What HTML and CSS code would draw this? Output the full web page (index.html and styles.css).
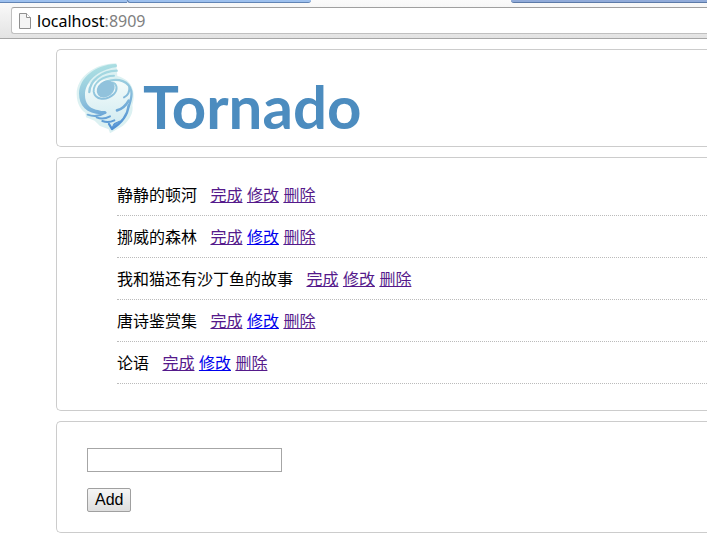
FILE: index.html
```html
<!DOCTYPE html>
<html lang="zh-CN">
<head>
    <meta charset="UTF-8">
    <meta name="viewport" content="width=device-width, initial-scale=1.0">
    <title>Tornado</title>
    <link rel="stylesheet" href="styles.css">
</head>
<body>

    <header class="browser">
        <div class="tabs">
            <span class="tab tab-first"></span>
            <span class="tab tab-second"></span>
            <span class="tab-active"></span>
            <span class="tab tab-last"></span>
        </div>
        <div class="toolbar">
            <div class="address">
                <svg class="page-icon" width="12" height="16" viewBox="0 0 12 16" aria-hidden="true">
                    <path d="M.5.5h7l4 4v11H.5z" fill="#f4f4f4" stroke="#909090"/>
                    <path d="M7.5.5v4h4" fill="#fff" stroke="#909090"/>
                </svg>
                <span class="url">localhost<span class="port">:8909</span></span>
            </div>
        </div>
    </header>

    <main class="page">
        <div class="panel logo">
            <svg class="logo-icon" width="73" height="85" viewBox="0 0 219 255" aria-hidden="true">
                <defs>
                    <linearGradient id="line" gradientUnits="userSpaceOnUse" x1="80" y1="25" x2="130" y2="225">
                        <stop offset="0" stop-color="#aee2e3"/>
                        <stop offset=".5" stop-color="#8cc0dc"/>
                        <stop offset="1" stop-color="#4a8cd2"/>
                    </linearGradient>
                    <linearGradient id="body" x1="0" y1="0" x2="0" y2="1">
                        <stop offset="0" stop-color="#f5fcfb"/>
                        <stop offset="1" stop-color="#cfeaf0"/>
                    </linearGradient>
                </defs>
                <path d="M139 22C72 22 20 65 20 114C20 144 34 164 46 170L48 184L74 194L90 210L116 220L120 232L158 210C182 190 191 168 187 148C198 112 190 72 142 60Z" fill="#dcf1f2"/>
                <path d="M138 70C174 70 192 106 180 145C180 175 160 200 128 216L118 202L92 192L82 178L58 172C36 160 32 130 34 112C38 90 60 70 138 70Z" fill="url(#body)"/>
                <path d="M136 24C76 26 28 66 27 112C27 152 53 178 104 174C109 173 109 165 104 165C92 166 87 161 78 161C56 156 45 140 45 118C44 78 82 42 137 34C143 33 142 24 136 24Z" fill="url(#line)"/>
                <g fill="none" stroke="url(#line)" stroke-linecap="round" stroke-linejoin="round">
                    <path d="M140 44C96 45 59 73 58 108" stroke-width="7"/>
                    <path d="M132 59C98 59 69 82 71 107C75 133 109 135 131 115C145 101 141 82 127 80" stroke-width="6"/>
                    <path d="M108 77C146 64 178 76 184 106C187 122 181 137 176 152" stroke-width="7"/>
                    <path d="M178 94C179 108 172 119 162 124" stroke-width="6"/>
                    <path d="M176 134C167 150 154 160 141 163" stroke-width="8"/>
                    <path d="M53 176C76 185 91 180 107 170M80 184C93 190 107 188 120 181M97 195C110 200 123 198 133 193" stroke-width="6"/>
                    <path d="M117 204L126 219C150 204 172 185 176 149" stroke-width="7"/>
                    <path d="M126 216L132 203L148 196Z" fill="#5a99d5" stroke-width="3"/>
                </g>
                <ellipse cx="107" cy="99" rx="29" ry="23" transform="rotate(-38 107 99)" fill="#91c2dc"/>
            </svg>
            <span class="logo-text">Tornado</span>
        </div>

        <div class="panel todos">
            <ul class="todo-list">
                <li>静静的顿河 <span class="actions"><a class="visited" href="#">完成</a> <a class="visited" href="#">修改</a> <a class="visited" href="#">删除</a></span></li>
                <li>挪威的森林 <span class="actions"><a class="visited" href="#">完成</a> <a href="#">修改</a> <a class="visited" href="#">删除</a></span></li>
                <li>我和猫还有沙丁鱼的故事 <span class="actions"><a class="visited" href="#">完成</a> <a class="visited" href="#">修改</a> <a class="visited" href="#">删除</a></span></li>
                <li>唐诗鉴赏集 <span class="actions"><a class="visited" href="#">完成</a> <a href="#">修改</a> <a class="visited" href="#">删除</a></span></li>
                <li>论语 <span class="actions"><a class="visited" href="#">完成</a> <a href="#">修改</a> <a class="visited" href="#">删除</a></span></li>
            </ul>
        </div>

        <form class="panel add-form">
            <input class="title-input" type="text" name="title" aria-label="Title">
            <button class="add-button" type="submit">Add</button>
        </form>
    </main>

</body>
</html>
```
FILE: styles.css
```css
* {
    box-sizing: border-box;
}
body {
    margin: 0;
    background-color: #fff;
    font-family: "Liberation Sans", "Noto Sans CJK SC", sans-serif;
    font-size: 16px;
    color: #000;
}

/* browser bar */
.browser {
    background: linear-gradient(#fbfbfb, #e3e3e3);
    border-bottom: 1px solid #a6a6a6;
}
.tabs {
    display: flex;
    height: 3px;
}
.tab {
    background-color: #9dc0ee;
    border-bottom: 1px solid #6184b5;
}
.tab-first {
    width: 18%;
}
.tab-second {
    width: 26%;
    border-left: 1px solid #6184b5;
    border-radius: 0 0 3px 3px;
}
.tab-active {
    width: 200px;
}
.tab-last {
    flex: 1;
    background-color: #91abd9;
    border-bottom-color: #5c7aa8;
    border-radius: 0 0 0 3px;
}
.toolbar {
    padding: 4px 0 4px 11px;
}
.address {
    display: flex;
    align-items: center;
    gap: 6px;
    height: 27px;
    padding-left: 7px;
    background-color: #fff;
    border: 1px solid #c0c0c0;
    border-top-color: #a0a0a0;
    border-right: 0;
    border-radius: 3px 0 0 3px;
}
.url {
    font-family: "Noto Sans", sans-serif;
    font-size: 16px;
    line-height: 24px;
}
.port {
    color: #808080;
}

/* page */
.page {
    padding: 10px 0 20px 56px;
}
.panel {
    margin-bottom: 10px;
    border: 1px solid #ccc;
    border-right: 0;
    border-radius: 5px 0 0 5px;
}
.logo {
    display: flex;
    align-items: center;
    height: 98px;
    padding-left: 13px;
}
.logo-text {
    font-family: Lato, sans-serif;
    font-size: 60px;
    font-weight: bold;
    line-height: 72px;
    padding-top: 16px;
    color: #4c8cbf;
}
.todos {
    padding: 16px 0 26px 60px;
}
.todo-list {
    margin: 0;
    padding: 0;
    list-style: none;
}
.todo-list li {
    height: 42px;
    padding-top: 1px;
    line-height: 42px;
    border-bottom: 1px dotted #bbb;
}
.actions {
    margin-left: 9px;
}
a {
    color: #00e;
}
a.visited {
    color: #551a8b;
}
.add-form {
    display: flex;
    flex-direction: column;
    align-items: flex-start;
    gap: 16px;
    padding: 26px 30px 20px;
}
.title-input {
    width: 195px;
    height: 24px;
    padding: 1px 2px;
    font: inherit;
    border: 1px solid #a6a6a6;
}
.add-button {
    height: 24px;
    padding: 0 7px;
    font: inherit;
    color: #000;
    background: linear-gradient(#f6f6f6, #dedede);
    border: 1px solid #a0a0a0;
    border-radius: 2px;
}
```
